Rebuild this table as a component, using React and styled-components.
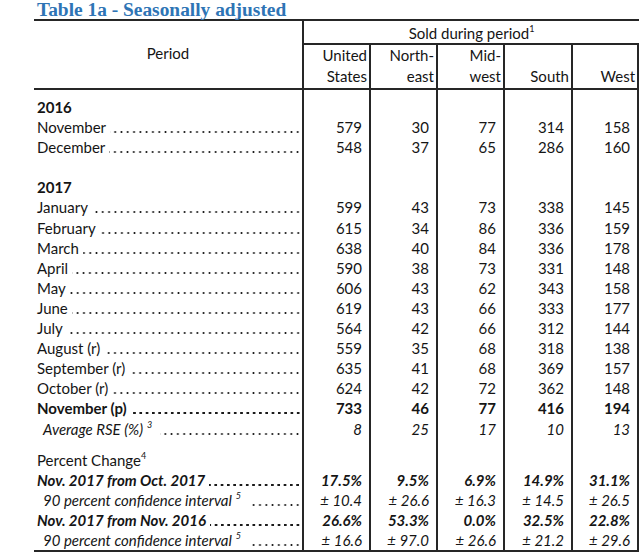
import React from "react";
import styled, { createGlobalStyle } from "styled-components";

const LINE = "2px solid #262626";

const WIDTHS = [270, 67, 67, 67, 68, 66];

const COLUMNS = [
  ["United", "States"],
  ["North-", "east"],
  ["Mid-", "west"],
  ["", "South"],
  ["", "West"],
];

// kind decides the look of a row: year / month / bold / rse / heading / change / ci / gap
const ROWS = [
  { kind: "gap", h: 7 },
  { kind: "year", label: "2016" },
  { kind: "month", label: "November", values: ["579", "30", "77", "314", "158"] },
  { kind: "month", label: "December", values: ["548", "37", "65", "286", "160"] },
  { kind: "gap", h: 20.1 },
  { kind: "year", label: "2017" },
  { kind: "month", label: "January", values: ["599", "43", "73", "338", "145"] },
  { kind: "month", label: "February", values: ["615", "34", "86", "336", "159"] },
  { kind: "month", label: "March", values: ["638", "40", "84", "336", "178"] },
  { kind: "month", label: "April", values: ["590", "38", "73", "331", "148"] },
  { kind: "month", label: "May", values: ["606", "43", "62", "343", "158"] },
  { kind: "month", label: "June", values: ["619", "43", "66", "333", "177"] },
  { kind: "month", label: "July", values: ["564", "42", "66", "312", "144"] },
  { kind: "month", label: "August (r)", values: ["559", "35", "68", "318", "138"] },
  { kind: "month", label: "September (r)", values: ["635", "41", "68", "369", "157"] },
  { kind: "month", label: "October (r)", values: ["624", "42", "72", "362", "148"] },
  { kind: "bold", label: "November (p)", values: ["733", "46", "77", "416", "194"] },
  { kind: "rse", label: "Average RSE (%)", sup: "3", values: ["8", "25", "17", "10", "13"] },
  { kind: "gap", h: 11.3 },
  { kind: "heading", label: "Percent Change", sup: "4" },
  { kind: "change", label: "Nov. 2017 from Oct. 2017", values: ["17.5%", "9.5%", "6.9%", "14.9%", "31.1%"] },
  { kind: "ci", label: "90 percent confidence interval", sup: "5", values: ["± 10.4", "± 26.6", "± 16.3", "± 14.5", "± 26.5"] },
  { kind: "change", label: "Nov. 2017 from Nov. 2016", values: ["26.6%", "53.3%", "0.0%", "32.5%", "22.8%"] },
  { kind: "ci", label: "90 percent confidence interval", sup: "5", values: ["± 16.6", "± 97.0", "± 26.6", "± 21.2", "± 29.6"] },
];

const LOOK = {
  year: { weight: 700, style: "normal", indent: 0, leader: false },
  month: { weight: 400, style: "normal", indent: 0, leader: true },
  bold: { weight: 700, style: "normal", indent: 0, leader: true },
  rse: { weight: 400, style: "italic", indent: 6, leader: true },
  heading: { weight: 400, style: "normal", indent: 0, leader: false },
  change: { weight: 700, style: "italic", indent: 0, leader: true },
  ci: { weight: 400, style: "italic", indent: 6, leader: true },
};

const App = () => {
  return (
    <Page>
      <GlobalStyle />
      <Title>Table 1a - Seasonally adjusted</Title>
      <Table>
        <colgroup>
          {WIDTHS.map((w, i) => (
            <Col key={i} $w={w} />
          ))}
        </colgroup>
        <thead>
          <tr>
            <PeriodHead rowSpan={2}>Period</PeriodHead>
            <GroupHead colSpan={5}>
              Sold during period<Sup>1</Sup>
            </GroupHead>
          </tr>
          <tr>
            {COLUMNS.map(([a, b], i) => (
              <ColHead key={i}>
                {a}
                <br />
                {b}
              </ColHead>
            ))}
          </tr>
        </thead>
        <tbody>
          {ROWS.map((row, i) => {
            if (row.kind === "gap") {
              return (
                <tr key={i}>
                  <LabelCell $h={row.h} />
                  {COLUMNS.map((_, j) => (
                    <ValueCell key={j} $h={row.h} />
                  ))}
                </tr>
              );
            }
            const look = LOOK[row.kind];
            return (
              <tr key={i}>
                <LabelCell $h={20.1} $weight={look.weight} $style={look.style}>
                  <LabelLine $indent={look.indent}>
                    <span>
                      {row.label}
                      {row.sup && <Sup $gap={row.kind !== "heading"}>{row.sup}</Sup>}
                    </span>
                    {look.leader && (
                      <Leader $wide={look.indent > 0} $bold={look.weight > 400} />
                    )}
                  </LabelLine>
                </LabelCell>
                {COLUMNS.map((_, j) => (
                  <ValueCell key={j} $h={20.1} $weight={look.weight} $style={look.style}>
                    {row.values ? row.values[j] : ""}
                  </ValueCell>
                ))}
              </tr>
            );
          })}
        </tbody>
      </Table>
    </Page>
  );
};

const GlobalStyle = createGlobalStyle`
  body {
    margin: 0;
    background: #fff;
  }
`;

const Page = styled.div`
  width: 640px;
  height: 555px;
  overflow: hidden;
  padding-left: 34px;
  box-sizing: border-box;
  font-family: Lato, "Liberation Sans", sans-serif;
  color: #151515;
`;

const Title = styled.h1`
  margin: 0;
  padding-left: 3px;
  height: 19px;
  font-family: "Liberation Serif", serif;
  font-weight: bold;
  font-size: 19.4px;
  line-height: 19px;
  color: #2e74b5;
  white-space: nowrap;
`;

const Table = styled.table`
  width: 605px;
  table-layout: fixed;
  border-collapse: separate;
  border-spacing: 0;
  border-top: ${LINE};
  border-bottom: ${LINE};
  font-size: 15px;
`;

const Col = styled.col`
  width: ${(p) => p.$w}px;
`;

const PeriodHead = styled.th`
  padding: 0 0 3px;
  border-right: ${LINE};
  border-bottom: ${LINE};
  font-weight: 400;
  text-align: center;
  vertical-align: middle;
`;

const GroupHead = styled.th`
  height: 22px;
  padding: 0;
  border-bottom: ${LINE};
  font-weight: 400;
  text-align: center;
  vertical-align: bottom;
  line-height: 20px;
`;

const ColHead = styled.th`
  height: 42px;
  padding: 0 2px 1px 0;
  border-right: ${LINE};
  border-bottom: ${LINE};
  font-weight: 400;
  text-align: right;
  vertical-align: bottom;
  line-height: 21px;
`;

const LabelCell = styled.td`
  height: ${(p) => p.$h}px;
  padding: 0 0 0 3px;
  border-right: ${LINE};
  font-weight: ${(p) => p.$weight || 400};
  font-style: ${(p) => p.$style || "normal"};
  line-height: ${(p) => p.$h}px;
`;

const LabelLine = styled.div`
  display: flex;
  align-items: baseline;
  white-space: nowrap;
  padding-left: ${(p) => p.$indent}px;
`;

/* dotted leader running from the label up to the column rule */
const Leader = styled.span`
  flex: 1;
  align-self: stretch;
  margin-left: ${(p) => (p.$wide ? 8 : 4)}px;
  margin-right: 1px;
  background-image: radial-gradient(
    circle,
    #1a1a1a ${(p) => (p.$bold ? 1.05 : 0.75)}px,
    transparent ${(p) => (p.$bold ? 1.5 : 1.2)}px
  );
  background-size: 6.3px 4px;
  background-repeat: repeat-x;
  background-position: right 0 top 13px;
`;

const ValueCell = styled.td`
  height: ${(p) => p.$h}px;
  padding: 0 7px 0 0;
  border-right: ${LINE};
  text-align: right;
  font-weight: ${(p) => p.$weight || 400};
  font-style: ${(p) => p.$style || "normal"};
  line-height: ${(p) => p.$h}px;
  white-space: nowrap;
`;

const Sup = styled.sup`
  font-size: 9px;
  line-height: 0;
  vertical-align: 7px;
  margin-left: ${(p) => (p.$gap ? 4 : 0)}px;
`;

export default App;
